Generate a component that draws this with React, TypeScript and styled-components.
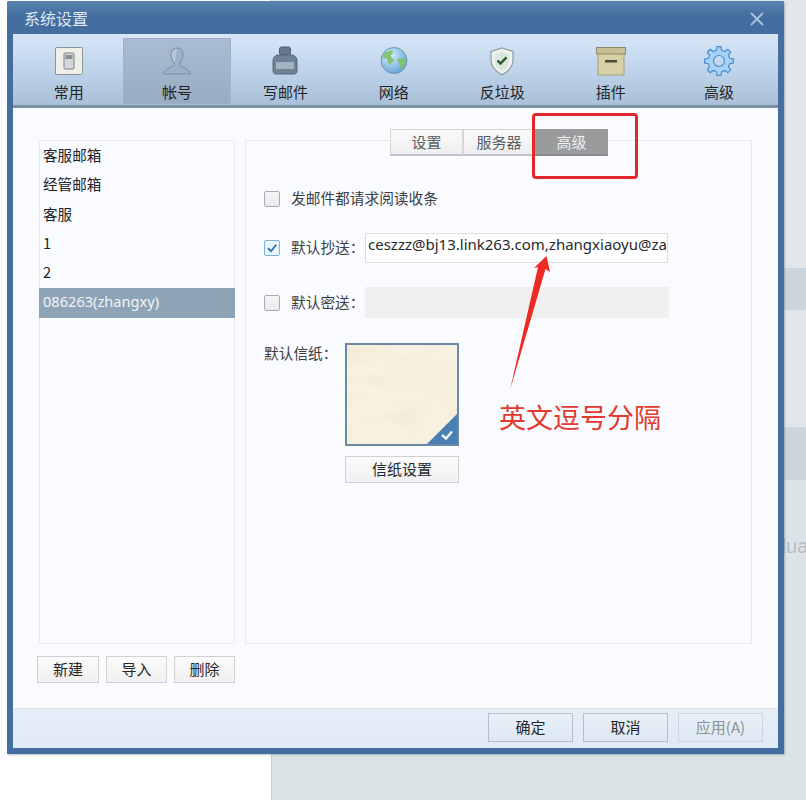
import React from "react";
import styled, { createGlobalStyle } from "styled-components";

const Global = createGlobalStyle`
  html, body { margin: 0; padding: 0; background: #fff; }
  body { font-family: "Noto Sans CJK SC", "Noto Sans", sans-serif; }
  * { box-sizing: border-box; }
`;

const Page = styled.div`
  position: relative;
  width: 806px;
  height: 800px;
  overflow: hidden;
  background: #fff;
`;
const Backdrop = styled.div`
  position: absolute;
  left: 271px;
  top: 0;
  right: 0;
  bottom: 0;
  background: #dde4e8;
  border-left: 1px solid #c6ced3;
  display: flex;
  flex-direction: column;
`;
const BackPlain = styled.div`
  height: 268px;
  background: #e0e6ea;
`;
const BackBand = styled.div<{ $h: number }>`
  height: ${(p) => p.$h}px;
  background: #cbd5dd;
`;
const BackMiddle = styled.div`
  height: 117px;
  background: #e0e6ea;
`;
const BackText = styled.div`
  margin: 55px 0 0 503px;
  font: 20px "Liberation Sans", sans-serif;
  color: #b4bdc4;
`;
const Dialog = styled.div`
  position: absolute;
  left: 7px;
  top: 1px;
  width: 777px;
  height: 753px;
  background: #436e9f;
  border-radius: 2px 2px 0 0;
  box-shadow: 1px 1px 2px rgba(70, 80, 90, 0.35);
  padding: 0 6px 6px 6px;
  display: flex;
  flex-direction: column;
`;
const TitleBar = styled.div`
  height: 33px;
  flex: none;
  display: flex;
  align-items: center;
  justify-content: space-between;
  margin: 0 -6px;
  padding: 0 20px 0 17px;
  color: #dfe8f2;
  font-size: 16px;
  background: linear-gradient(#5b84b0, #436e9f 45%);
  border-radius: 2px 2px 0 0;
`;
const CloseIcon = styled.svg`
  width: 14px;
  height: 14px;
  margin-top: 3px;
`;
const Toolbar = styled.div`
  height: 74px;
  flex: none;
  display: grid;
  grid-template-columns: repeat(7, 108.4px);
  padding: 4px 0 0 1.5px;
  background: linear-gradient(#d8e7f7, #bcd2e9 55%, #a9c0d8);
  border-bottom: 3px solid #7d909f;
`;
const ToolItem = styled.div<{ $active?: boolean }>`
  height: 66px;
  display: flex;
  flex-direction: column;
  align-items: center;
  justify-content: flex-end;
  font-size: 15px;
  line-height: 22px;
  color: #1f2326;
  background: ${(p) => (p.$active ? "linear-gradient(#a9bdd2, #9fb3c9 60%, #97abc1)" : "transparent")};
  border: ${(p) => (p.$active ? "1px solid #9db0c4" : "1px solid transparent")};
`;
const ToolIcon = styled.svg`
  width: 32px;
  height: 32px;
  margin-bottom: 4px;
  display: block;
`;
const Body = styled.div`
  flex: 1;
  min-height: 0;
  background: #f9fbff;
  display: grid;
  grid-template-columns: 196px 507px;
  column-gap: 10px;
  padding: 32px 0 0 26px;
  grid-template-rows: 504px auto;
  row-gap: 12px;
`;
const AccountList = styled.div`
  border: 1px solid #e9ecf1;
  padding-top: 1px;
  display: flex;
  flex-direction: column;
`;
const AccountRow = styled.div<{ $selected?: boolean }>`
  height: 29.3px;
  line-height: 26px;
  padding-left: 4px;
  margin: 0 -1px;
  font-family: ${(p) => (p.$selected ? '"Noto Sans", sans-serif' : '"Noto Sans CJK SC", sans-serif')};
  font-size: 14.6px;
  color: ${(p) => (p.$selected ? "#f0f4f8" : "#20242a")};
  background: ${(p) => (p.$selected ? "#8fa3b6" : "transparent")};
`;
const Panel = styled.div`
  position: relative;
  border: 1px solid #e6e9ed;
  padding: 0 0 0 18px;
`;
const Tabs = styled.div`
  position: absolute;
  top: -12px;
  left: 144px;
  display: flex;
`;
const Tab = styled.div<{ $active?: boolean }>`
  width: 73px;
  height: 27px;
  text-align: center;
  line-height: 24px;
  font-size: 15px;
  color: ${(p) => (p.$active ? "#eef0f2" : "#5a5e62")};
  background: ${(p) => (p.$active ? "#9a9b9c" : "linear-gradient(#fafafa, #efefef)")};
  border: 1px solid ${(p) => (p.$active ? "#9a9b9c" : "#d4d6d8")};
  border-bottom: 2px solid ${(p) => (p.$active ? "#8c8d8e" : "#bfc1c3")};
  margin-right: -0.5px;
`;
const Form = styled.div`
  display: flex;
  flex-direction: column;
  padding-top: 42px;
`;
const OptionRow = styled.div<{ $mt?: number }>`
  display: flex;
  align-items: center;
  height: 31px;
  margin-top: ${(p) => p.$mt ?? 0}px;
`;
const Check = styled.div<{ $on?: boolean }>`
  width: 16px;
  height: 16px;
  flex: none;
  border: 1px solid ${(p) => (p.$on ? "#7fb2d8" : "#a6a9ad")};
  border-radius: 2px;
  background: ${(p) => (p.$on ? "#eaf4fb" : "linear-gradient(#f4f4f4, #ebebeb)")};
  display: flex;
  align-items: center;
  justify-content: center;
`;
const OptionLabel = styled.div<{ $w?: number }>`
  margin-left: 11px;
  font-size: 14.7px;
  line-height: 20px;
  padding-bottom: 1px;
  color: #3c4044;
  width: ${(p) => (p.$w ? `${p.$w}px` : "auto")};
  flex: none;
  white-space: nowrap;
`;
const TextInput = styled.div`
  width: 303px;
  height: 30px;
  line-height: 29px;
  background: #fff;
  border: 1px solid #dcdfe2;
  padding: 0 2px;
  font: 15px "Noto Sans", sans-serif;
  color: #26292c;
  overflow: hidden;
  white-space: nowrap;
`;
const DisabledInput = styled.div`
  width: 304px;
  height: 31px;
  background: #efefef;
`;
const PaperRow = styled.div`
  display: flex;
  margin-top: 25px;
`;
const PaperLabel = styled.div`
  width: 81px;
  flex: none;
  font-size: 14.7px;
  line-height: 19px;
  color: #3c4044;
`;
const PaperCol = styled.div`
  width: 114px;
  display: flex;
  flex-direction: column;
`;
const Paper = styled.div`
  position: relative;
  height: 103px;
  border: 2px solid #6b8aa5;
  background: #f8f2e2;
  overflow: hidden;
`;
const PaperTexture = styled.svg`
  display: block;
  width: 100%;
  height: 100%;
`;
const PaperBadge = styled.svg`
  position: absolute;
  right: 0;
  bottom: 0;
  width: 30px;
  height: 30px;
`;
const Btn = styled.div<{ $w?: number; $h?: number; $disabled?: boolean; $blue?: boolean }>`
  width: ${(p) => (p.$w ? `${p.$w}px` : "100%")};
  height: ${(p) => p.$h ?? 27}px;
  flex: none;
  text-align: center;
  line-height: ${(p) => (p.$h ?? 27) - 4}px;
  font-size: 15px;
  color: ${(p) => (p.$disabled ? "#8b9196" : "#25282b")};
  background: ${(p) =>
    p.$blue ? "linear-gradient(#e8f0f8, #dde8f2)" : "linear-gradient(#fbfbfb, #f0f0f0)"};
  border: 1px solid ${(p) => (p.$disabled ? "#cdd6df" : p.$blue ? "#b4c1cd" : "#d0d1d3")};
`;
const PaperBtn = styled(Btn)`
  margin-top: 10px;
`;
const ListButtons = styled.div`
  display: flex;
  justify-content: space-between;
  margin-left: -2px;
`;
const Footer = styled.div`
  height: 40px;
  flex: none;
  background: linear-gradient(#e6eff8, #dfeaf5);
  border-top: 1px solid #dee3e7;
  display: flex;
  justify-content: flex-end;
  align-items: flex-start;
  gap: 10px;
  padding: 4px 15px 0 0;
`;
const Callout = styled.div`
  position: absolute;
  left: 532px;
  top: 113px;
  width: 106px;
  height: 66px;
  border: 3px solid #e5262a;
  border-radius: 4px;
`;
const ArrowSvg = styled.svg`
  position: absolute;
  left: 500px;
  top: 250px;
  width: 60px;
  height: 145px;
`;
const Note = styled.div`
  position: absolute;
  left: 499px;
  top: 398px;
  font-size: 27px;
  line-height: 38px;
  color: #e23a2e;
  white-space: nowrap;
`;

const Tick = () => (
  <svg width="12" height="12" viewBox="0 0 12 12">
    <path d="M2 6.2 L5 9.2 L10.2 2.8" fill="none" stroke="#2c6ba5" strokeWidth="1.8" />
  </svg>
);

const gearPath = (() => {
  const pts: string[] = [];
  const teeth = 8;
  for (let i = 0; i < teeth; i++) {
    const a = (i / teeth) * Math.PI * 2;
    const step = (Math.PI * 2) / teeth;
    const at = (r: number, t: number) =>
      `${(16 + r * Math.cos(a + t)).toFixed(2)} ${(16 + r * Math.sin(a + t)).toFixed(2)}`;
    pts.push(at(11, -step * 0.32), at(14.6, -step * 0.17), at(14.6, step * 0.17), at(11, step * 0.32));
  }
  return `M${pts.join("L")}zM16 10.5a5.5 5.5 0 1 0 0 11 5.5 5.5 0 0 0 0-11z`;
})();

const icons: Record<string, React.ReactNode> = {
  common: (
    <>
      <rect x="2.5" y="2.5" width="27" height="27" rx="1" fill="#eef0e8" stroke="#8b9298" />
      <rect x="11" y="8" width="10" height="16" rx="1" fill="#d4d8db" stroke="#7b8288" />
      <rect x="12.5" y="10" width="7" height="4" fill="#8a9096" />
    </>
  ),
  account: (
    <>
      <path d="M16 3c-4 0-6 3-6 7 0 3 1.5 6 3 8 .8 1 .6 2.4-1 3.2C8 23 4 25 2 29h28c-2-4-6-6-10-7.800-1.600-.8-1.800-2.200-1-3.200 1.500-2 3-5 3-8 0-4-2-7-6-7z" fill="#9db0c5" stroke="#7a8da3" strokeWidth="1" />
      <path d="M16 4.500c-3 0-4.500 2.500-4.500 5.500 0 2.500 1 5 2.500 7" fill="#c4d1de" fillOpacity="0.6" stroke="#cbd6e2" strokeWidth="1" />
    </>
  ),
  write: (
    <>
      <rect x="10.500" y="2" width="11" height="8" rx="2" fill="#66788a" stroke="#4f5f6e" />
      <path d="M8 10h16c2.500 1 4 3 4 6v10c0 2-1.500 3-3 3H7c-1.500 0-3-1-3-3V16c0-3 1.500-5 4-6z" fill="#6e8295" stroke="#566878" />
      <rect x="7" y="17" width="18" height="7" fill="#a5b3c1" />
    </>
  ),
  net: (
    <>
      <defs>
        <radialGradient id="g1" cx="0.35" cy="0.3" r="0.8">
          <stop offset="0" stopColor="#d6eefb" />
          <stop offset="1" stopColor="#5da0d6" />
        </radialGradient>
      </defs>
      <circle cx="16" cy="15.500" r="13" fill="url(#g1)" stroke="#6f97b8" />
      <path d="M8 7c3-1.500 6-2 7-1 1 2-2 3-2 5s3 2 3 4-3 2-4 5c-2-1-2-4-3-6-1-1-4-1-5-2 0-2 2-4 4-5z" fill="#86c477" />
      <path d="M20 14c3-1 6-1 8 0 0 4-2 8-6 10-1-2 0-4-1-6-1-1-2-3-1-4z" fill="#7fc272" />
    </>
  ),
  spam: (
    <>
      <path d="M16 3l11 3.500v9c0 7-5 11-11 14.500C10 26.500 5 22.500 5 15.500v-9z" fill="#eef1ee" stroke="#8e9aa2" strokeWidth="1.200" />
      <path d="M16 7l7 2.200v6.300c0 5-3.500 8-7 10.500-3.500-2.500-7-5.500-7-10.500V9.200z" fill="#dbe6df" />
      <path d="M11.500 15.500l3 3 6-6.200" fill="none" stroke="#2a5a28" strokeWidth="2.400" />
    </>
  ),
  plugin: (
    <>
      <rect x="3" y="8" width="26" height="22" fill="#d9d1a6" stroke="#a6a07a" />
      <rect x="1.500" y="2.500" width="29" height="6.500" fill="#c6bf95" stroke="#8c8762" />
      <rect x="10" y="15" width="12" height="2.500" fill="#4a4a3a" />
    </>
  ),
  advanced: <path fillRule="evenodd" d={gearPath} fill="#a9d1f3" stroke="#4a8dd4" strokeWidth="1.200" />,
};

const tools = [
  ["common", "常用"],
  ["account", "帐号"],
  ["write", "写邮件"],
  ["net", "网络"],
  ["spam", "反垃圾"],
  ["plugin", "插件"],
  ["advanced", "高级"],
];
const accounts = ["客服邮箱", "经管邮箱", "客服", "1", "2", "086263(zhangxy)"];

export default function App() {
  return (
    <Page>
      <Global />
      <Backdrop>
        <BackPlain />
        <BackBand $h={42} />
        <BackMiddle />
        <BackBand $h={53} />
        <BackText>dua</BackText>
      </Backdrop>
      <Dialog>
        <TitleBar>
          <span>系统设置</span>
          <CloseIcon viewBox="0 0 14 14">
            <path d="M1 1 L13 13 M13 1 L1 13" stroke="#a9c0da" strokeWidth="2" />
          </CloseIcon>
        </TitleBar>
        <Toolbar>
          {tools.map(([k, label]) => (
            <ToolItem key={k} $active={k === "account"}>
              <ToolIcon viewBox="0 0 32 32">{icons[k]}</ToolIcon>
              {label}
            </ToolItem>
          ))}
        </Toolbar>
        <Body>
          <AccountList>
            {accounts.map((a) => (
              <AccountRow key={a} $selected={a.startsWith("086")}>
                {a}
              </AccountRow>
            ))}
          </AccountList>
          <Panel>
            <Tabs>
              <Tab>设置</Tab>
              <Tab>服务器</Tab>
              <Tab $active>高级</Tab>
            </Tabs>
            <Form>
              <OptionRow>
                <Check />
                <OptionLabel>发邮件都请求阅读收条</OptionLabel>
              </OptionRow>
              <OptionRow $mt={18}>
                <Check $on>
                  <Tick />
                </Check>
                <OptionLabel $w={74}>默认抄送：</OptionLabel>
                <TextInput>ceszzz@bj13.link263.com,zhangxiaoyu@za</TextInput>
              </OptionRow>
              <OptionRow $mt={24}>
                <Check />
                <OptionLabel $w={74}>默认密送：</OptionLabel>
                <DisabledInput />
              </OptionRow>
              <PaperRow>
                <PaperLabel>默认信纸：</PaperLabel>
                <PaperCol>
                  <Paper>
                    <PaperTexture>
                      <filter id="pp">
                        <feTurbulence type="fractalNoise" baseFrequency="0.02 0.05" numOctaves="3" seed="4" />
                        <feColorMatrix values="0 0 0 0 0.9  0 0 0 0 0.84  0 0 0 0 0.7  2.2 0 0 0 -0.7" />
                      </filter>
                      <rect width="100%" height="100%" filter="url(#pp)" />
                    </PaperTexture>
                    <PaperBadge viewBox="0 0 30 30">
                      <path d="M30 0V30H0z" fill="#4a7fb3" />
                      <path d="M15 21l4 3.500 6-7" fill="none" stroke="#f2f5f8" strokeWidth="2.400" />
                    </PaperBadge>
                  </Paper>
                  <PaperBtn>信纸设置</PaperBtn>
                </PaperCol>
              </PaperRow>
            </Form>
          </Panel>
          <ListButtons>
            <Btn $w={62}>新建</Btn>
            <Btn $w={61}>导入</Btn>
            <Btn $w={61}>删除</Btn>
          </ListButtons>
        </Body>
        <Footer>
          <Btn $w={85} $h={29} $blue>确定</Btn>
          <Btn $w={85} $h={29} $blue>取消</Btn>
          <Btn $w={85} $h={29} $blue $disabled>应用(A)</Btn>
        </Footer>
      </Dialog>
      <Callout />
      <ArrowSvg viewBox="0 0 60 145">
        <path d="M46.500 6 L50 22 L45.500 19 L10 140 L38 17 L34 18 z" fill="#ee2a24" />
      </ArrowSvg>
      <Note>英文逗号分隔</Note>
    </Page>
  );
}
